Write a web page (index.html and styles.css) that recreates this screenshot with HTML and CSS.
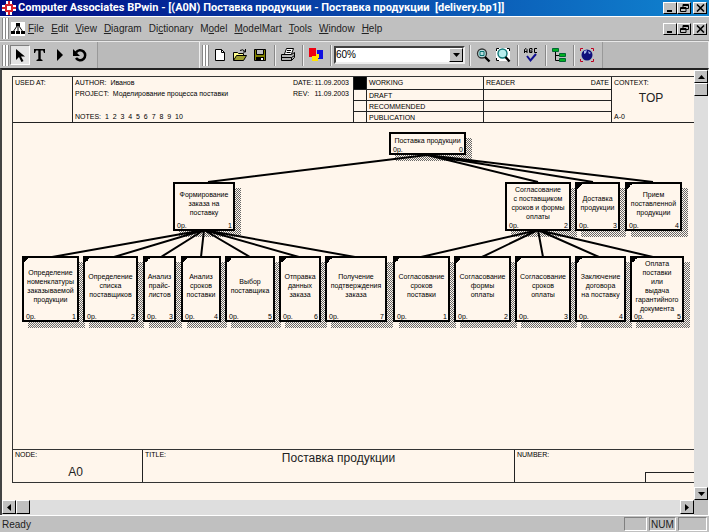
FILE: index.html
```html
<!DOCTYPE html>
<html lang="ru">
<head>
<meta charset="utf-8">
<title>Computer Associates BPwin</title>
<link rel="stylesheet" href="styles.css">
</head>
<body>
<header class="titlebar">
  <svg class="app-icon" width="14" height="14" viewBox="0 0 14 14"><path fill="#fff" d="M4 0h6v4h4v6h-4v4H4v-4H0V4h4z"/><path fill="none" stroke="#d8232c" stroke-width="2" d="M7 0v4M7 10v4M0 7h4M10 7h4M4 4h6v6H4z"/></svg>
  <h1>Computer Associates BPwin - [(A0N) Поставка продукции - Поставка продукции&nbsp; [delivery.bp1]]</h1>
  <div class="winbtns">
    <button aria-label="Minimize"><svg width="9" height="8"><path d="M1 6h5v2H1z"/></svg></button>
    <button aria-label="Restore"><svg width="9" height="8"><path fill="none" stroke="#000" d="M3 3V.5h5.500v4H6M3 1.500h5M.5 3.500H6v4H.5zM1 4.500h5"/></svg></button>
    <button class="close" aria-label="Close"><svg width="9" height="8"><path stroke="#000" stroke-width="1.600" d="M1 .5l7 7M8 .5l-7 7"/></svg></button>
  </div>
</header>
<div class="menubar">
  <span class="grip"></span>
  <svg class="doc-icon" width="14" height="14"><path fill="#fff" d="M0 0h14v14H0z"/><path stroke="#000" d="M7 3v8M6 4L2 10M8 4l4 6"/><path d="M5 1h4v3H5zM0 9h4v3H0zM5 9h4v3H5zM10 9h4v3h-4z"/></svg>
  <nav>
    <a href="#"><u>F</u>ile</a><a href="#"><u>E</u>dit</a><a href="#"><u>V</u>iew</a><a href="#"><u>D</u>iagram</a><a href="#">Di<u>c</u>tionary</a><a href="#">M<u>o</u>del</a><a href="#"><u>M</u>odelMart</a><a href="#"><u>T</u>ools</a><a href="#"><u>W</u>indow</a><a href="#"><u>H</u>elp</a>
  </nav>
  <div class="winbtns">
    <button aria-label="Minimize document"><svg width="9" height="8"><path d="M1 6h5v2H1z"/></svg></button>
    <button aria-label="Restore document"><svg width="9" height="8"><path fill="none" stroke="#000" d="M3 3V.5h5.500v4H6M3 1.500h5M.5 3.500H6v4H.5zM1 4.500h5"/></svg></button>
    <button class="close" aria-label="Close document"><svg width="9" height="8"><path stroke="#000" stroke-width="1.600" d="M1 .5l7 7M8 .5l-7 7"/></svg></button>
  </div>
</div>
<div class="toolbars">
  <div class="toolbar draw">
    <span class="grip"></span>
    <button class="pressed" aria-label="Pointer"><svg width="16" height="16"><path d="M4 2v11l3-3 2.500 5 2-1L9 9.500h4z"/></svg></button>
    <button aria-label="Text"><svg width="16" height="16"><path d="M2 2h11v4h-1l-1-2.500H8.700V12l1.800 1v1h-6v-1l1.800-1V3.500H4L3 6H2z"/></svg></button>
    <button aria-label="Play"><svg width="16" height="16"><path d="M5 2l6 6-6 6z"/></svg></button>
    <button aria-label="Undo"><svg width="16" height="16"><path fill="none" stroke="#000" stroke-width="2.500" d="M4 5.500a5 5 0 1 1 0 5.500"/><path d="M1 2v7h7z"/></svg></button>
  </div>
  <div class="blank"></div>
  <div class="toolbar standard">
    <span class="grip"></span>
    <button aria-label="New"><svg width="16" height="16"><path fill="#fff" stroke="#000" d="M3.500 2.500h6l3 3v8h-9z"/><path fill="none" stroke="#000" d="M9.500 2.500v3h3"/></svg></button>
    <button aria-label="Open"><svg width="16" height="16"><path fill="#ffff8c" stroke="#000" d="M1.500 13V5.500h4l1 1h5V9"/><path fill="#a0a030" stroke="#000" d="M1.500 13.500l3-5h10l-3 5z"/><path fill="none" stroke="#000" d="M8 3.500q3-2 5 1M13.500 2v3H11"/></svg></button>
    <button aria-label="Save"><svg width="16" height="16"><path fill="#808000" stroke="#000" d="M2.500 2.500h11v11h-11z"/><path fill="#c0c0c0" stroke="#000" d="M4.500 2.500h7v5h-7z"/><path d="M4 10h8v4H4z"/><path fill="#fff" d="M9 11h2v2H9z"/></svg></button>
    <span class="sep"></span>
    <button aria-label="Print"><svg width="16" height="16"><path fill="#fff" stroke="#000" d="M4.500 7l2-5.500h7L11.500 7"/><path stroke="#000" d="M7 3.500h4M6.500 5.500h4"/><path fill="#b0b0b0" stroke="#000" d="M1.500 7.500h10l3-2v5l-3 3h-10zM1.500 10.500h10l3-2M11.500 10.500v3"/></svg></button>
    <span class="sep"></span>
    <button aria-label="Colors"><svg width="16" height="16"><path fill="#f00010" d="M1 1h7v9H1z"/><path fill="#1010e0" d="M9 3h6v9H9z"/><path fill="#ffe400" d="M4 9h4V7h3v4h-1v3H4z"/></svg></button>
    <span class="sep"></span>
    <label class="zoom"><select aria-label="Zoom"><option>60%</option></select><span class="drop"><svg width="7" height="4"><path d="M0 0h7L3.500 4z"/></svg></span></label>
    <span class="sep"></span>
    <button aria-label="Zoom in"><svg width="16" height="16"><circle cx="7" cy="6.500" r="4.500" fill="#b8dede" stroke="#333" stroke-width="1.300"/><path fill="none" stroke="#087070" d="M5 4.500h4v4H5z"/><path stroke="#000" stroke-width="2.400" d="M10 10l4.500 4.500"/></svg></button>
    <button aria-label="Fit to window"><svg width="16" height="16"><path fill="#fff" d="M1 1h14v13H1z"/><path fill="none" stroke="#000" d="M1.500 4V1.500H4M12 1.500h2.500V4M1.500 11v2.500H4"/><circle cx="7.500" cy="6.500" r="4.500" fill="#b8eeee" stroke="#107878" stroke-width="1.400"/><path stroke="#000" stroke-width="2.400" d="M10.500 10l4 4.500"/></svg></button>
    <span class="sep"></span>
    <button aria-label="Spelling"><svg width="16" height="16"><path fill="none" stroke="#000" d="M1.500 6V2.500L3 1.500l1 1V6M2 4.500h2M6.500 1.500v4H9V4H7M9 3.500V1.500H7M14 1.500h-2.500v4H14"/><path fill="none" stroke="#101090" stroke-width="2" d="M4 9l3.500 4.500L13 7"/></svg></button>
    <span class="sep"></span>
    <button aria-label="Model explorer"><svg width="16" height="16"><path fill="none" stroke="#000" d="M4.500 5v8.500H9M4.500 8.500H9"/><path fill="#00b020" stroke="#063" d="M1.500 1.500h6v3h-6zM8.500 6.500h6v3h-6zM8.500 11.500h6v3h-6z"/></svg></button>
    <span class="sep"></span>
    <button aria-label="ModelMart"><svg width="16" height="16"><circle cx="8" cy="8" r="5.500" fill="#10107c"/><path fill="#a8b8e8" d="M5 4l3-1-1 3-2 1zM9 4l3 2-2 1z"/><path fill="none" stroke="#c00020" d="M1.500 4V1.500H4M12 1.500h2.500V4M1.500 12v2.500H4M12 14.500h2.500V12"/></svg></button>
  </div>
  <div class="blank rest"></div>
</div>
<div class="workspace">
  <main class="paper">
    <div class="sheet">
      <section class="head">
        <div>USED AT:</div>
        <div class="author">
          <p><span>AUTHOR:&nbsp; Иванов</span><span class="meta"><span>DATE:</span><span>11.09.2003</span></span></p>
          <p><span>PROJECT:&nbsp; Моделирование процесса поставки</span><span class="meta"><span>REV:</span><span>11.09.2003</span></span></p>
          <p class="notes">NOTES:&nbsp; 1&nbsp; 2&nbsp; 3&nbsp; 4&nbsp; 5&nbsp; 6&nbsp; 7&nbsp; 8&nbsp; 9&nbsp; 10</p>
        </div>
        <div class="rows marks"><p class="on"></p><p></p><p></p><p></p></div>
        <div class="rows"><p>WORKING</p><p>DRAFT</p><p>RECOMMENDED</p><p>PUBLICATION</p></div>
        <div class="rows"><p class="reader"><span>READER</span><span>DATE</span></p><p></p><p></p><p></p></div>
        <div class="context"><p>CONTEXT:</p><p class="big">TOP</p><p>A-0</p></div>
      </section>
      <section class="diagram">
        <div class="node root"><p>Поставка продукции</p><footer><span>0р.</span><span>0</span></footer></div>
        <div class="node mid m1"><p>Формирование<br>заказа на<br>поставку</p><footer><span>0р.</span><span>1</span></footer></div>
        <div class="node mid m2"><p>Согласование<br>с поставщиком<br>сроков и формы<br>оплаты</p><footer><span>0р.</span><span>2</span></footer></div>
        <div class="node mid leaf m3"><p>Доставка<br>продукции</p><footer><span>0р.</span><span>3</span></footer></div>
        <div class="node mid leaf m4"><p>Прием<br>поставленной<br>продукции</p><footer><span>0р.</span><span>4</span></footer></div>
        <div class="node low leaf a1"><p>Определение<br>номенклатуры<br>заказываемой<br>продукции</p><footer><span>0р.</span><span>1</span></footer></div>
        <div class="node low leaf a2"><p>Определение<br>списка<br>поставщиков</p><footer><span>0р.</span><span>2</span></footer></div>
        <div class="node low leaf a3"><p>Анализ<br>прайс-<br>листов</p><footer><span>0р.</span><span>3</span></footer></div>
        <div class="node low leaf a4"><p>Анализ<br>сроков<br>поставки</p><footer><span>0р.</span><span>4</span></footer></div>
        <div class="node low leaf a5"><p>Выбор<br>поставщика</p><footer><span>0р.</span><span>5</span></footer></div>
        <div class="node low leaf a6"><p>Отправка<br>данных<br>заказа</p><footer><span>0р.</span><span>6</span></footer></div>
        <div class="node low leaf a7"><p>Получение<br>подтверждения<br>заказа</p><footer><span>0р.</span><span>7</span></footer></div>
        <div class="node low leaf b1"><p>Согласование<br>сроков<br>поставки</p><footer><span>0р.</span><span>1</span></footer></div>
        <div class="node low leaf b2"><p>Согласование<br>формы<br>оплаты</p><footer><span>0р.</span><span>2</span></footer></div>
        <div class="node low leaf b3"><p>Согласование<br>сроков<br>оплаты</p><footer><span>0р.</span><span>3</span></footer></div>
        <div class="node low leaf b4"><p>Заключение<br>договора<br>на поставку</p><footer><span>0р.</span><span>4</span></footer></div>
        <div class="node low leaf b5"><p>Оплата<br>поставки<br>или<br>выдача<br>гарантийного<br>документа</p><footer><span>0р.</span><span>5</span></footer></div>
        <svg class="links" width="680" height="210"><path d="M414 32L195 59M414 32L525 59M414 32L580 59M414 32L640 59M191 107L39 134M191 107L101 134M191 107L148 134M191 107L188 134M191 107L237 134M191 107L286 134M191 107L342 134M525 107L408 134M525 107L469 134M525 107L530 134M525 107L586 134M525 107L640 134"/></svg>
      </section>
      <section class="foot">
        <div><p>NODE:</p><p class="big">A0</p></div>
        <div><p>TITLE:</p><p class="big title">Поставка продукции</p></div>
        <div class="number"><p>NUMBER:</p><span class="page"></span></div>
      </section>
    </div>
  </main>
  <div class="vscroll">
    <button aria-label="Scroll up"><svg width="7" height="4"><path d="M0 4h7L3.500 0z"/></svg></button>
    <span class="thumb"></span>
    <span class="track"></span>
    <button aria-label="Scroll down"><svg width="7" height="4"><path d="M0 0h7L3.500 4z"/></svg></button>
  </div>
  <div class="hscroll">
    <button aria-label="Scroll left"><svg width="4" height="7"><path d="M4 0v7L0 3.500z"/></svg></button>
    <span class="thumb"></span>
    <span class="track"></span>
    <button aria-label="Scroll right"><svg width="4" height="7"><path d="M0 0v7l4-3.500z"/></svg></button>
  </div>
  <div class="corner"></div>
</div>
<footer class="status"><span class="msg">Ready</span><span class="pane"></span><span class="pane num">NUM</span><span class="pane last"></span></footer>
</body>
</html>
```
FILE: styles.css
```css
* { box-sizing: border-box; }
body {
  margin: 0;
  height: 100vh;
  display: flex;
  flex-direction: column;
  overflow: hidden;
  background: #c0c0c0;
  color: #000;
  font: 10px/14px "Liberation Sans", Arial, sans-serif;
}
p, h1 { margin: 0; }
svg { display: block; flex: none; }
button { padding: 0; border: 0; background: none; display: flex; align-items: center; justify-content: center; flex: none; }

.titlebar { display: flex; align-items: center; height: 16px; padding: 0 2px; background: linear-gradient(90deg, #000a84, #1084d0); color: #fff; }
.titlebar h1 { flex: 1; margin-left: 2px; font: bold 11px/16px Roboto, "Liberation Sans", sans-serif; white-space: nowrap; overflow: hidden; }
.winbtns { display: flex; margin-left: auto; }
.winbtns button, .thumb, .vscroll button, .hscroll button, .drop {
  background: #c0c0c0;
  border: 1px solid;
  border-color: #fff #000 #000 #fff;
}
.winbtns button { width: 14px; height: 12px; }
.winbtns .close { margin-left: 2px; }

.menubar { display: flex; align-items: center; height: 25px; padding: 0 2px; border-top: 1px solid #fff; border-bottom: 1px solid #999; }
.menubar nav { display: flex; gap: 7px; margin-left: 3px; }
.menubar a { color: #222; text-decoration: none; }
.doc-icon { margin-left: 2px; }
.grip { width: 7px; height: 21px; flex: none; border: solid #888; border-width: 0 1px; background: linear-gradient(90deg, #fff 0 2px, #888 2px 3px, #fff 3px 5px); }

.toolbars { display: flex; height: 27px; border-top: 1px solid #e8e8e8; }
.toolbar { display: flex; align-items: center; flex: none; }
.toolbar button { width: 20px; height: 20px; }
.toolbar .pressed { background: #e4e4e4; border: 1px solid; border-color: #808080 #fff #fff #808080; }
.draw { padding: 0 7px 0 2px; }
.draw .grip, .standard .grip { margin-right: 1px; }
.standard { padding: 0 5px 0 2px; }
.blank { width: 103px; background: #bababa; border-left: 1px solid #999; border-right: 1px solid #eee; }
.rest { flex: 1; width: auto; }
.sep { width: 2px; height: 21px; margin: 0 2px 0 4px; border-left: 1px solid #888; border-right: 1px solid #eee; }
.zoom { display: flex; width: 131px; height: 18px; border: 2px solid; border-color: #404040 #eee #eee #404040; background: #fff; }
.zoom select { flex: 1; min-width: 0; padding: 0; border: 0; appearance: none; background: #fff; color: #000; font: 10px/14px "Liberation Sans", Arial, sans-serif; }
.drop { width: 14px; display: flex; align-items: center; justify-content: center; }

.workspace { flex: 1; min-height: 0; display: grid; grid-template-columns: 1fr 14px; grid-template-rows: 1fr 15px; border-top: 2px solid #222; border-left: 2px solid #444; border-right: 1px solid #fff; }
.paper { min-width: 0; min-height: 0; display: flex; padding: 6px 0 17px 10px; background: #fff6ec; overflow: hidden; }
.sheet { flex: 1; min-width: 0; display: flex; flex-direction: column; border: solid #333; border-width: 1px 0 1px 1px; font-size: 7px; line-height: 9px; }
.head { display: grid; grid-template-columns: 60px 1fr 13px 117px 128px 82px; height: 46px; border-bottom: 1px solid #222; }
.head > div { padding: 1px 2px; border-right: 1px solid #222; }
.head > .context, .foot > .number { border-right: 0; }
.head > .author { display: flex; flex-direction: column; }
.author p { display: flex; justify-content: space-between; height: 11px; padding-right: 2px; }
.author .notes { margin-top: auto; height: 9px; }
.meta { display: flex; justify-content: space-between; width: 56px; }
.head > .rows { padding: 0; display: grid; grid-template-rows: 12px 11px 11px 11px; }
.rows p { padding: 1px 2px; border-top: 1px solid #222; }
.rows p:first-child { border-top: 0; }
.rows .on { background: #000; }
.rows .reader { display: flex; justify-content: space-between; }
.big { font-size: 12px; line-height: 14px; text-align: center; color: #222; }
.head > .context { display: flex; flex-direction: column; }
.context .big { margin: 4px 4px auto 0; }

.foot { display: grid; grid-template-columns: 130px 1fr 179px; height: 33px; border-top: 1px solid #333; }
.foot > div { padding: 0 2px; border-right: 1px solid #222; }
.foot .big { margin: 6px 4px 0 0; }
.foot .title { margin: -8px 0 0; padding-left: 20px; }
.foot .number { display: flex; justify-content: space-between; padding-right: 0; }
.page { align-self: flex-end; width: 49px; height: 10px; border: solid #222; border-width: 1px 0 0 1px; }

/* Node positions on the free drawing canvas */
.diagram { position: relative; z-index: 0; flex: 1; min-height: 0; }
.links { position: absolute; left: 0; top: 0; fill: none; stroke: #000; stroke-width: 2; }
.node { position: absolute; display: flex; flex-direction: column; border: 2px solid #000; background: #fff6ec; text-align: center; white-space: nowrap; }
.node p { flex: 1; display: grid; align-content: center; justify-content: center; }
.node footer { display: flex; justify-content: space-between; padding: 0 1px 0 2px; line-height: 7px; }
.node::after {
  content: "";
  position: absolute;
  z-index: -1;
  left: 4px; top: 4px; right: -8px; bottom: -8px;
  background: repeating-conic-gradient(#666 0 25%, #fff6ec 0 50%) 0 0 / 2px 2px;
  clip-path: polygon(100% 0, 100% 100%, 0 100%, 0 calc(100% - 6px), calc(100% - 6px) calc(100% - 6px), calc(100% - 6px) 0);
}
.leaf::before { content: ""; position: absolute; left: 0; top: 0; width: 5px; height: 5px; background: linear-gradient(135deg, #000 50%, transparent 50%); }
.root { left: 376px; top: 9px; width: 77px; height: 23px; }
.mid { top: 59px; height: 49px; }
.m1 { left: 160px; width: 62px; }
.m2 { left: 492px; width: 66px; }
.m3 { left: 562px; width: 45px; }
.m4 { left: 612px; width: 57px; }
.low { top: 133px; height: 66px; }
.a1 { left: 9px; width: 57px; }
.a2 { left: 70px; width: 55px; }
.a3 { left: 130px; width: 33px; }
.a4 { left: 168px; width: 40px; }
.a5 { left: 212px; width: 50px; }
.a6 { left: 266px; width: 42px; }
.a7 { left: 312px; width: 62px; }
.b1 { left: 380px; width: 57px; }
.b2 { left: 441px; width: 57px; }
.b3 { left: 502px; width: 56px; }
.b4 { left: 562px; width: 51px; }
.b5 { left: 617px; width: 54px; }

.vscroll { display: flex; flex-direction: column; background: #dedede; }
.vscroll button, .vscroll .thumb { height: 13px; width: 14px; }
.hscroll { display: flex; background: #dedede; padding-bottom: 1px; }
.hscroll button, .hscroll .thumb { width: 14px; height: 14px; }
.track { flex: 1; }
.corner { background: #c0c0c0; }

.status { display: flex; height: 17px; padding: 1px 2px 1px 2px; border-top: 1px solid #fff; gap: 2px; line-height: 15px; color: #222; }
.msg { flex: 1; }
.pane { width: 23px; border: 1px solid; border-color: #808080 #fff #fff #808080; line-height: 14px; }
.num { width: 27px; text-align: center; }
.last { width: 29px; }
```
